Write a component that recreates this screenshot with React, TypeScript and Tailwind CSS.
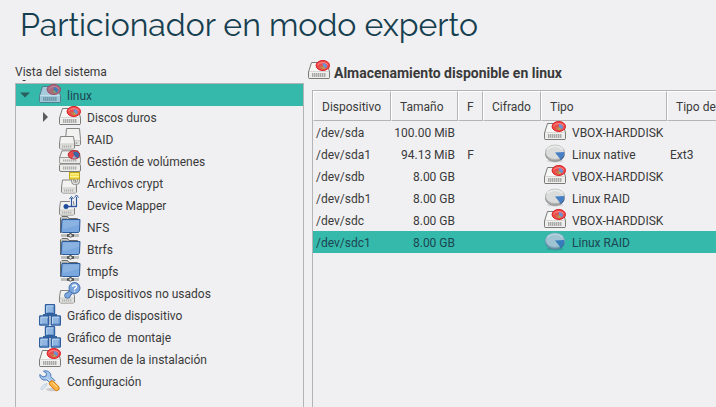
import type { ReactNode } from 'react';

function Svg({ children }: { children: ReactNode }) {
  return (
    <svg className="size-[22px] shrink-0" viewBox="0 0 22 22" fill="none" aria-hidden="true">
      {children}
    </svg>
  );
}

function Vents({ x, y, width, height = 3 }: { x: number; y: number; width: number; height?: number }) {
  return (
    <>
      <rect x={x} y={y} width={width} height={height} fill="#d3d3d1" />
      <path
        d={`M${x} ${y + height / 2}h${width}`}
        stroke="#b0b0ae"
        strokeWidth={height}
        strokeDasharray="1 1"
      />
    </>
  );
}

function DiskIcon({ selected = false }: { selected?: boolean }) {
  const line = selected ? '#4f7f8c' : '#7a7a78';
  const top = selected ? '#a5cbdc' : '#f6f6f4';
  const face = selected ? '#9fc6d8' : '#ececea';
  return (
    <Svg>
      <path d="M3.500 2.500h15.500l2.500 9.500v5.500a1 1 0 0 1-1 1h-19a1 1 0 0 1-1-1V12z" fill={top} stroke={line} />
      <path d="M1 12.500h20v5H1z" fill={face} />
      <path d="M1 11.500h20" stroke={selected ? '#c0dde8' : '#d6d6d4'} />
      <rect x="4" y="13" width="14" height="4" fill={selected ? '#83adbf' : '#cfcfcd'} />
      <path d="M4 15h14" stroke={selected ? '#6f9bad' : '#a9a9a7'} strokeWidth="4" strokeDasharray="1 1" />
      <path d="M1 18.500h20" stroke={line} />
      <ellipse cx="14.800" cy="5.500" rx="6.700" ry="5" fill={selected ? '#ad6a80' : '#f04a4b'} stroke={selected ? '#96506b' : '#d81a20'} />
      <path d="M9.500 5a5.500 3.500 0 0 1 10.400 0" stroke={selected ? '#c28b9b' : '#fb9490'} />
      <path d="M14.500 5.500l-3.400.4 1 2.600 2.400.6z" fill={selected ? '#a26e72' : '#c8704f'} />
      <path d="M14.800 3v3l3.200 2.600 1.200-2.600-1.700-2.300z" fill={selected ? '#397fbc' : '#6b93d6'} />
      <path d="M14.500 6v3.300l3-1z" fill={selected ? '#70a96d' : '#a3b64a'} />
    </Svg>
  );
}

function PartitionIcon({ selected = false }: { selected?: boolean }) {
  return (
    <Svg>
      <ellipse cx="11" cy="18" rx="8.500" ry="1.500" fill="#000" fillOpacity=".12" />
      <path d="M1.500 9v2c0 4 4.300 7.300 9.500 7.300s9.500-3.300 9.500-7.300V9z" fill={selected ? '#6a96aa' : '#a8aaa9'} stroke={selected ? '#5687a0' : '#8f9190'} />
      <ellipse cx="11" cy="9.300" rx="9.500" ry="7.200" fill={selected ? '#a0c3d3' : '#d9dcda'} stroke={selected ? '#7ea9bb' : '#b3b6b4'} />
      <path d="M3.500 6.500c2.500-4.500 12.500-4.500 15 0" stroke={selected ? '#b5d2de' : '#eceeec'} strokeWidth="1.500" />
      <path d="M11 9.500l9.300-.5c0 3-1.500 5.500-4.300 6.700z" fill={selected ? '#347dbc' : '#467fc6'} />
      <path d="M16 15.700c2.800-1.200 4.300-3.700 4.300-6.700v2.500c0 2.500-1.500 4.600-3.800 5.700z" fill={selected ? '#296da7' : '#3465a4'} />
    </Svg>
  );
}

function SmallDrive({ x, y, width, height }: { x: number; y: number; width: number; height: number }) {
  const face = y + height - 5;
  return (
    <>
      <path
        d={`M${x + 1} ${y}h${width - 2}l1 ${height - 6}v5l-1 1h-${width - 2}l-1-1v-5z`}
        fill="#f2f2f0"
        stroke="#848482"
      />
      <path d={`M${x + 0.5} ${face}h${width - 1}v4.5h-${width - 1}z`} fill="#e2e2df" />
      <path d={`M${x + 0.5} ${face}h${width - 1}`} stroke="#cbcbc9" />
      <Vents x={x + 2.5} y={face + 1.5} width={width - 5} height={2} />
    </>
  );
}

function RaidIcon() {
  return (
    <Svg>
      <SmallDrive x={6.5} y={0.5} width={15} height={17} />
      <SmallDrive x={0.5} y={8.5} width={15} height={12.5} />
    </Svg>
  );
}

function VolumesIcon() {
  return (
    <Svg>
      <path d="M3 .8h16l2.500 7V13H.5V7.800z" fill="#f1f1ef" stroke="#848482" />
      <rect x=".5" y="7.500" width="21" height="6" rx="1.500" fill="#ebebe8" stroke="#9c9c9a" />
      <Vents x={4} y={9.5} width={14} height={2} />
      <rect x=".5" y="14" width="21" height="7.500" rx="1.500" fill="#ebebe8" stroke="#7d7d7b" />
      <Vents x={4} y={16.5} width={14} height={3} />
      <ellipse cx="15" cy="4.800" rx="5.800" ry="4.200" fill="#e8494b" stroke="#b8242a" />
      <path d="M14 1.500l1 4 3.500 2.500c3-2 2-5-.5-6z" fill="#3d68a8" />
      <path d="M15 5.500l-2 3h4.500z" fill="#93b2dc" />
    </Svg>
  );
}

function CryptIcon() {
  return (
    <Svg>
      <SmallDrive x={2.5} y={8} width={15} height={13} />
      <path d="M13.500 6v2.500c0 4 6 4 6 0V6" stroke="#8d8d8b" strokeWidth="3" />
      <path d="M13.500 6v2.500c0 4 6 4 6 0V6" stroke="#e1e1df" strokeWidth="1.300" />
      <rect x="10.500" y=".5" width="10" height="6.500" fill="#f2df50" stroke="#c0a51a" />
      <path d="M11 2h9M11 4.500h9" stroke="#fdf49a" />
    </Svg>
  );
}

function MapperIcon() {
  return (
    <Svg>
      <SmallDrive x={0.5} y={7.5} width={15} height={13.5} />
      <path d="M7 12.500h10.500V3M12.500 12V6" stroke="#fff" strokeWidth="3" />
      <path d="M7 12.500h5.500V4M12.500 12.500h5V3" stroke="#2c559a" strokeWidth="1.300" />
      <path d="M10.500 5l2-2.500 2 2.500M15.500 3.500l2-2.500 2 2.500" stroke="#2c559a" />
      <circle cx="7" cy="12.500" r="2.500" fill="#1f4f9c" />
    </Svg>
  );
}

function NetworkFolderIcon() {
  return (
    <Svg>
      <path d="M1.500 17V2L3 .5h5.500l1.500 2h8.500V15" fill="#a3a39f" stroke="#6a6a66" />
      <path d="M2.500 4V1.500H8l1.500 2H18" stroke="#cfcfcc" />
      <path d="M3 3.500h18L20.500 15l-1 1.500h-16L2 15.500z" fill="#7aa7de" stroke="#2d5b99" />
      <path d="M4 4.500h16v4.500C14 9.500 10 13 4 12.500z" fill="#96bae4" fillOpacity=".6" />
      <path d="M2 19.500h18" stroke="#8b8b87" strokeWidth="2" />
      <path d="M2 19.300h18" stroke="#c9c9c6" />
      <path d="M8 19.500h7" stroke="#4b4c49" strokeWidth="2.500" />
      <path d="M11.500 17v2" stroke="#555753" strokeWidth="2" />
      <circle cx="11.500" cy="19.500" r="1.700" fill="#e2e2df" stroke="#555753" />
    </Svg>
  );
}

function UnusedIcon() {
  return (
    <Svg>
      <SmallDrive x={0.5} y={8.5} width={15} height={12.5} />
      <path d="M9 13l4-4" stroke="#4673b0" strokeWidth="5" strokeLinecap="round" />
      <circle cx="8.500" cy="13.500" r="2.800" fill="#7fa8dc" stroke="#4673b0" />
      <path d="M9 13l4-4" stroke="#7fa8dc" strokeWidth="3" />
      <circle cx="15.500" cy="6" r="5.500" fill="#7ba6dd" stroke="#4673b0" />
      <path d="M13.500 4.800c0-2.500 4-2.500 4 0 0 1.500-2 1.300-2 3M15.500 8.800v1" stroke="#fff" strokeWidth="1.400" />
    </Svg>
  );
}

function GraphNode({ x, y }: { x: number; y: number }) {
  return (
    <>
      <rect x={x} y={y} width="9" height="9" rx=".5" fill="#8fb5e0" stroke="#2f5f9f" strokeWidth="1.400" />
      <path d={`M${x + 1.2} ${y + 8}V${y + 1.2}H${x + 8}`} stroke="#b9d4f1" />
      <path d={`M${x + 2} ${y + 7.8}h5.8v-5.800`} stroke="#6795ca" />
    </>
  );
}

function GraphIcon() {
  return (
    <Svg>
      <path d="M11 9v2.500M5 13v-2h12v2" stroke="#39659f" strokeWidth="2" />
      <GraphNode x={6.5} y={0.7} />
      <GraphNode x={0.7} y={12} />
      <GraphNode x={12.3} y={12} />
    </Svg>
  );
}

function ToolsIcon() {
  return (
    <Svg>
      <ellipse cx="14" cy="19.500" rx="7" ry="1.800" fill="#000" fillOpacity=".15" />
      <path
        d="M4.500 1.200C8 0 12.500 2 11.800 6.500l4 4-3.500 3.500-4.500-4.200C4 11 .5 8.500.8 4.500L4 7l3-1 .6-2.600z"
        fill="#a6c4ea"
        stroke="#4a7cbb"
      />
      <path d="M7.500 8l6 5" stroke="#d5e5f8" />
      <path d="M13 13.500l4.500 4.500" stroke="#d57c12" strokeWidth="6" strokeLinecap="round" />
      <path d="M13 13.500l4.500 4.500" stroke="#fbb445" strokeWidth="4.400" strokeLinecap="round" />
      <path d="M13.500 12.500l4.500 4.500" stroke="#ffe09a" />
      <path d="M1.500 18.500l3.500-4 3-1-1 3-4 3.500z" fill="#dae5f1" stroke="#b4c5d8" strokeWidth=".7" />
    </Svg>
  );
}

type Node = {
  label: string;
  icon: ReactNode;
  open?: boolean;
  children?: Node[];
};

const tree: Node[] = [
  {
    label: 'linux',
    icon: <DiskIcon selected />,
    open: true,
    children: [
      { label: 'Discos duros', icon: <DiskIcon />, open: false },
      { label: 'RAID', icon: <RaidIcon /> },
      { label: 'Gestión de volúmenes', icon: <VolumesIcon /> },
      { label: 'Archivos crypt', icon: <CryptIcon /> },
      { label: 'Device Mapper', icon: <MapperIcon /> },
      { label: 'NFS', icon: <NetworkFolderIcon /> },
      { label: 'Btrfs', icon: <NetworkFolderIcon /> },
      { label: 'tmpfs', icon: <NetworkFolderIcon /> },
      { label: 'Dispositivos no usados', icon: <UnusedIcon /> },
    ],
  },
  { label: 'Gráfico de dispositivo', icon: <GraphIcon /> },
  { label: 'Gráfico de  montaje', icon: <GraphIcon /> },
  { label: 'Resumen de la instalación', icon: <DiskIcon /> },
  { label: 'Configuración', icon: <ToolsIcon /> },
];

function TreeRow({ node, selected, nested }: { node: Node; selected: boolean; nested: boolean }) {
  return (
    <div
      className={`flex h-[22px] items-center whitespace-pre ${nested ? 'pl-5' : ''} ${
        selected ? 'bg-[#35b9ab] text-[#1b4652]' : ''
      }`}
    >
      <span className="flex w-[23px] shrink-0 justify-center">
        {node.open !== undefined && (
          <button type="button" aria-label={`${node.open ? 'Contraer' : 'Expandir'} ${node.label}`} className="-ml-1.5">
            <svg className="size-3" viewBox="0 0 12 12" aria-hidden="true">
              <path
                d={node.open ? 'M1 3.500h10L6 8.500z' : 'M4 1l5 5-5 5z'}
                fill={node.open ? '#2b5f5c' : '#5c5c5c'}
              />
            </svg>
          </button>
        )}
      </span>
      {node.icon}
      <span className="pt-0.5 pl-1.5">{node.label}</span>
    </div>
  );
}

const devices = [
  { name: '/dev/sda', size: '100.00 MiB', format: '', type: 'VBOX-HARDDISK', fs: '', disk: true },
  { name: '/dev/sda1', size: '94.13 MiB', format: 'F', type: 'Linux native', fs: 'Ext3', disk: false },
  { name: '/dev/sdb', size: '8.00 GB', format: '', type: 'VBOX-HARDDISK', fs: '', disk: true },
  { name: '/dev/sdb1', size: '8.00 GB', format: '', type: 'Linux RAID', fs: '', disk: false },
  { name: '/dev/sdc', size: '8.00 GB', format: '', type: 'VBOX-HARDDISK', fs: '', disk: true },
  { name: '/dev/sdc1', size: '8.00 GB', format: '', type: 'Linux RAID', fs: '', disk: false },
];

const columns = ['Dispositivo', 'Tamaño', 'F', 'Cifrado', 'Tipo', 'Tipo de'];

export default function App() {
  return (
    <main className="flex min-h-screen flex-col bg-[#f0f0f2] font-['Roboto',sans-serif] text-[12px] leading-4 text-[#3a3a3a]">
      <h1 className="px-5 pt-1 font-['Raleway','Lato',sans-serif] text-[32px] leading-[42px] whitespace-nowrap text-[#173f4f]">
        Particionador en modo experto
      </h1>
      <div className="grid flex-1 grid-cols-[289fr_404fr] gap-2 pt-3 pl-[15px]">
        <section className="flex min-w-0 flex-col">
          <h2 id="system-view" className="pt-1.5 pb-[3px]">
            V<span className="underline underline-offset-4">i</span>sta del sistema
          </h2>
          <ul role="tree" aria-labelledby="system-view" className="flex-1 border border-b-0 border-[#b4b4b6]">
            {tree.map((node, index) => (
              <li key={node.label} role="treeitem" aria-selected={index === 0} aria-expanded={node.open}>
                <TreeRow node={node} selected={index === 0} nested={false} />
                {node.children && (
                  <ul role="group">
                    {node.children.map((child) => (
                      <li key={child.label} role="treeitem" aria-selected={false} aria-expanded={child.open}>
                        <TreeRow node={child} selected={false} nested />
                      </li>
                    ))}
                  </ul>
                )}
              </li>
            ))}
          </ul>
        </section>
        <section className="-ml-1 flex min-w-0 flex-col">
          <h2 className="flex items-start gap-1 pt-0.5 pb-2 text-[14px] font-bold whitespace-nowrap">
            <DiskIcon />
            <span className="pt-[5px]">Almacenamiento disponible en linux</span>
          </h2>
          <div className="ml-1 flex-1 overflow-hidden border-t border-l border-[#b4b4b6]">
            <table className="w-full table-fixed border-separate border-spacing-0 text-left whitespace-nowrap">
              <colgroup>
                <col className="w-[78px]" />
                <col className="w-[67px]" />
                <col className="w-[25px]" />
                <col className="w-[58px]" />
                <col className="w-[126px]" />
                <col />
              </colgroup>
              <thead>
                <tr>
                  {columns.map((column) => (
                    <th
                      key={column}
                      scope="col"
                      className="h-[30px] border-t border-r border-b border-l border-t-white border-r-[#b4b4b6] border-b-[#b4b4b6] border-l-white p-0 font-normal last:border-r-0"
                    >
                      <button type="button" className="w-full pt-0.5 pl-2 text-left">
                        {column}
                      </button>
                    </th>
                  ))}
                </tr>
              </thead>
              <tbody>
                {devices.map((device) => {
                  const selected = device.name === '/dev/sdc1';
                  return (
                    <tr
                      key={device.name}
                      aria-selected={selected}
                      className={`h-[22px] ${selected ? 'bg-[#35b9ab] text-[#1b4652]' : ''}`}
                    >
                      <td className="p-0 pt-0.5 pl-[3px]">{device.name}</td>
                      <td className="p-0 pt-0.5 pr-[3px] text-right">{device.size}</td>
                      <td className="p-0 pt-0.5 text-center">{device.format}</td>
                      <td className="p-0" />
                      <td className="p-0 pl-[3px]">
                        <span className="flex items-center gap-1.5">
                          {device.disk ? <DiskIcon /> : <PartitionIcon selected={selected} />}
                          <span className="pt-0.5">{device.type}</span>
                        </span>
                      </td>
                      <td className="p-0 pt-0.5 pl-[3px]">{device.fs}</td>
                    </tr>
                  );
                })}
              </tbody>
            </table>
          </div>
        </section>
      </div>
    </main>
  );
}
